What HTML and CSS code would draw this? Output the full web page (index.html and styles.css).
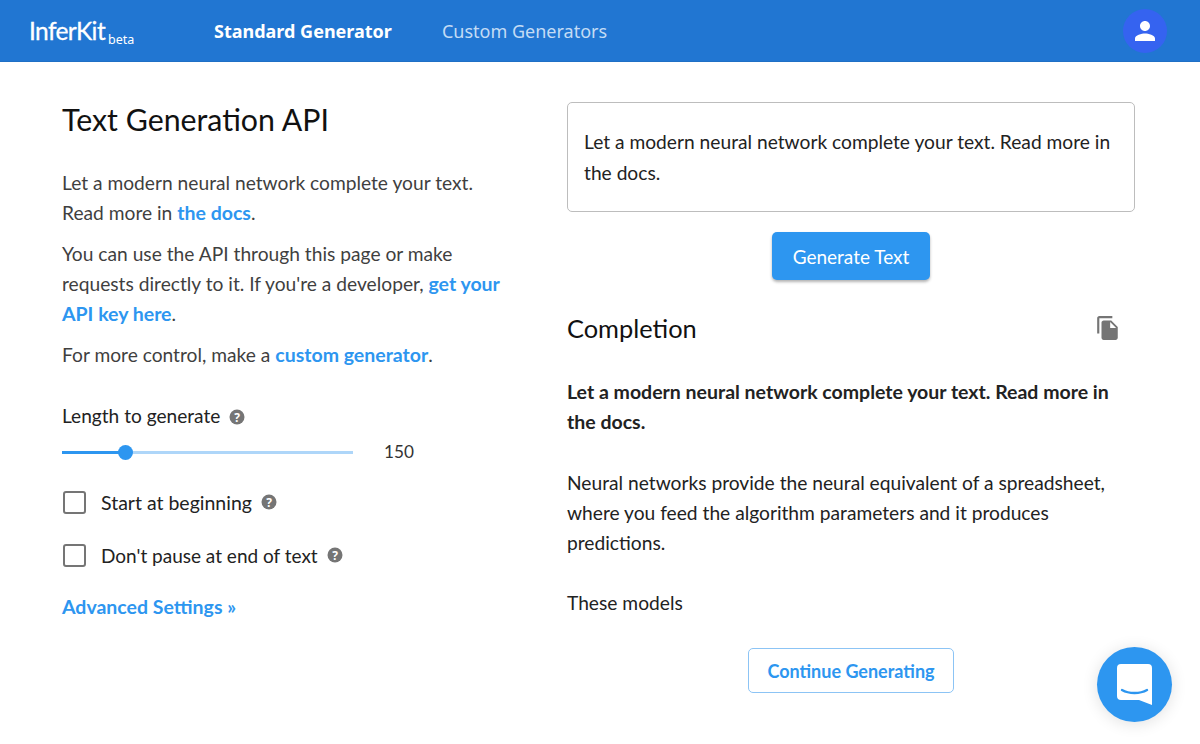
FILE: index.html
```html
<!DOCTYPE html>
<html lang="en">

<head>
  <meta charset="UTF-8" />
  <title>InferKit - Text Generation API</title>
  <link rel="stylesheet" href="styles.css">
</head>

<body>
  <div class="header">
    <div class="logo">InferKit<span class="logo-beta">beta</span></div>
    <a class="nav-link nav-active">Standard Generator</a>
    <a class="nav-link">Custom Generators</a>
    <div class="avatar">
      <svg width="30" height="30" viewBox="0 0 24 24" fill="#fff">
        <path d="M12 12c2.2 0 4-1.8 4-4s-1.8-4-4-4-4 1.800-4 4 1.800 4 4 4zm0 2c-2.700 0-8 1.300-8 4v2h16v-2c0-2.700-5.300-4-8-4z" />
      </svg>
    </div>
  </div>

  <div class="main">
    <div class="left">
      <h1 class="title">Text Generation API</h1>
      <p class="para">Let a modern neural network complete your text.<br>Read more in <a class="link">the docs</a>.</p>
      <p class="para">You can use the API through this page or make<br>requests directly to it. If you're a developer, <a class="link">get your</a><br><a class="link">API key here</a>.</p>
      <p class="para">For more control, make a <a class="link">custom generator</a>.</p>

      <div class="length-label">Length to generate
        <svg class="help" width="16" height="16" viewBox="0 0 16 16"><circle cx="8" cy="8" r="7.500" fill="#757575" /><text x="8" y="12.500" text-anchor="middle" class="help-mark">?</text></svg>
      </div>
      <div class="slider-row">
        <div class="slider">
          <div class="slider-fill"></div>
          <div class="slider-thumb"></div>
        </div>
        <span class="slider-value">150</span>
      </div>

      <div class="check-row">
        <span class="checkbox"></span><span class="check-wide">Start at beginning</span>
        <svg class="help" width="16" height="16" viewBox="0 0 16 16"><circle cx="8" cy="8" r="7.500" fill="#757575" /><text x="8" y="12.500" text-anchor="middle" class="help-mark">?</text></svg>
      </div>
      <div class="check-row">
        <span class="checkbox"></span>Don't pause at end of text
        <svg class="help" width="16" height="16" viewBox="0 0 16 16"><circle cx="8" cy="8" r="7.500" fill="#757575" /><text x="8" y="12.500" text-anchor="middle" class="help-mark">?</text></svg>
      </div>
      <a class="link advanced">Advanced Settings »</a>
    </div>

    <div class="right">
      <div class="prompt">Let a modern neural network complete your text. Read more in the docs.</div>
      <div class="center"><button class="btn-primary">Generate Text</button></div>
      <div class="completion-head">
        <h2 class="subtitle">Completion</h2>
        <svg width="26" height="26" viewBox="0 0 24 24" fill="#757575">
          <path d="M16 1H4c-1.100 0-2 .9-2 2v14h2V3h12V1zm-1 4 6 6v10c0 1.100-.9 2-2 2H8c-1.100 0-2-.9-2-2V7c0-1.100.9-2 2-2h7zm-1 7h5.500L14 6.500V12z" />
        </svg>
      </div>
      <p class="output output-bold"><b>Let a modern neural network complete your text. Read more in the docs.</b></p>
      <p class="output">Neural networks provide the neural equivalent of a spreadsheet, where you feed the algorithm parameters and it produces predictions.</p>
      <p class="output">These models</p>
      <div class="center"><button class="btn-outline">Continue Generating</button></div>
    </div>
  </div>

  <div class="chat">
    <svg width="35" height="41" viewBox="0 0 35 41">
      <path d="M4 0h27a4 4 0 0 1 4 4v37l-13-5H4a4 4 0 0 1-4-4V4a4 4 0 0 1 4-4z" fill="#fff" />
      <path d="M5 26c7 4 18 4 25 0" fill="none" stroke="#2d96f0" stroke-width="2.400" stroke-linecap="round" />
    </svg>
  </div>
</body>

</html>
```

FILE: styles.css
```css
body {
  margin: 0;
  padding: 0;
  font-family: 'Lato', sans-serif;
  font-size: 19.2px;
  color: #3f3f3f;
  background-color: #fff;
  overflow: hidden;
}

.header {
  display: flex;
  align-items: center;
  height: 61px;
  padding: 0 33px 0 29px;
  background-color: #2176d2;
  border-bottom: 1px solid #1f6fc5;
}

.logo {
  width: 185px;
  font-family: 'Lato', sans-serif;
  font-size: 24.500px;
  color: #fff;
  letter-spacing: -0.6px;
  -webkit-text-stroke: 0.3px #fff;
}

.logo-beta {
  margin-left: 3px;
  font-family: 'Noto Sans', sans-serif;
  font-size: 12.500px;
  letter-spacing: 0;
  -webkit-text-stroke: 0;
  position: relative;
  top: 4px;
}

.nav-link {
  margin-right: 50px;
  font-family: 'Noto Sans', sans-serif;
  font-size: 18px;
  color: #c4dcf5;
}

.nav-active {
  color: #fff;
  font-weight: 700;
}

.avatar {
  display: flex;
  align-items: center;
  justify-content: center;
  width: 44px;
  height: 44px;
  margin-left: auto;
  border-radius: 50%;
  background-color: #3563f0;
}

.main {
  display: grid;
  grid-template-columns: 505px 1fr;
  padding: 0 65px 0 62px;
}

.left {
  padding-top: 39px;
}

.title {
  margin: 0 0 30px;
  font-size: 30.300px;
  line-height: 37px;
  font-weight: 400;
  color: #111;
}

.para {
  margin: 0 0 11px;
  width: 450px;
  line-height: 30px;
}

.link {
  color: #2d96f0;
  font-size: 19.500px;
  font-weight: 700;
}

.length-label {
  margin-top: 31px;
  font-size: 19.100px;
  line-height: 30px;
  color: #222;
}

.help {
  margin-left: 4px;
  vertical-align: -2px;
}

.help-mark {
  font-family: 'Noto Sans', sans-serif;
  font-size: 12px;
  font-weight: 700;
  fill: #fff;
}

.slider-row {
  display: flex;
  align-items: center;
  height: 30px;
  margin-top: 6px;
}

.slider {
  position: relative;
  width: 291px;
  height: 3px;
  background-color: #aed6f9;
}

.slider-fill {
  width: 64px;
  height: 100%;
  background-color: #2d96f0;
}

.slider-thumb {
  position: absolute;
  left: 56px;
  top: -6px;
  width: 15px;
  height: 15px;
  border-radius: 50%;
  background-color: #2d96f0;
}

.slider-value {
  margin: -2px 0 0 31px;
  font-size: 17.200px;
  color: #333;
}

.check-row {
  display: flex;
  align-items: center;
  height: 30px;
  margin-top: 20px;
  font-size: 19px;
  color: #222;
}

.check-row .help {
  margin-left: 9px;
  vertical-align: baseline;
}

.check-row + .check-row {
  margin-top: 23px;
}

.check-wide {
  font-size: 19.500px;
}

.checkbox {
  box-sizing: border-box;
  width: 23px;
  height: 23px;
  margin: 0 15px 0 1px;
  border: 2.500px solid #757575;
  border-radius: 3px;
}

.advanced {
  display: block;
  margin-top: 22px;
  line-height: 30px;
}

.right {
  padding-top: 40px;
}

.prompt {
  box-sizing: border-box;
  height: 110px;
  padding: 23px 16px;
  border: 1px solid #bdbdbd;
  border-radius: 5px;
  line-height: 31px;
  color: #222;
}

.center {
  display: flex;
  justify-content: center;
}

.btn-primary {
  width: 158px;
  height: 48px;
  margin-top: 20px;
  border: none;
  border-radius: 5px;
  background-color: #2d96f0;
  color: #fff;
  font-family: inherit;
  font-size: 19px;
  box-shadow: 0 2px 3px rgba(0, 0, 0, 0.3);
}

.completion-head {
  display: flex;
  align-items: center;
  justify-content: space-between;
  margin-top: 28px;
  padding-right: 14px;
}

.subtitle {
  margin: 0;
  font-size: 25.400px;
  line-height: 40px;
  font-weight: 400;
  color: #111;
}

.output {
  margin: 0 0 30px;
  line-height: 30px;
  color: #222;
}

.output-bold {
  margin-bottom: 31px;
  font-size: 19.500px;
}

.completion-head + .output {
  margin-top: 29px;
}

.btn-outline {
  width: 206px;
  height: 45px;
  border: 1px solid #8cc4f5;
  border-radius: 5px;
  background-color: #fff;
  color: #2d96f0;
  font-family: inherit;
  font-size: 18px;
  font-weight: 700;
}

.chat {
  position: absolute;
  left: 1097px;
  top: 647px;
  display: flex;
  align-items: center;
  justify-content: center;
  width: 75px;
  height: 75px;
  border-radius: 50%;
  background-color: #2d96f0;
  box-shadow: 0 2px 16px rgba(0, 0, 0, 0.12);
}
```
